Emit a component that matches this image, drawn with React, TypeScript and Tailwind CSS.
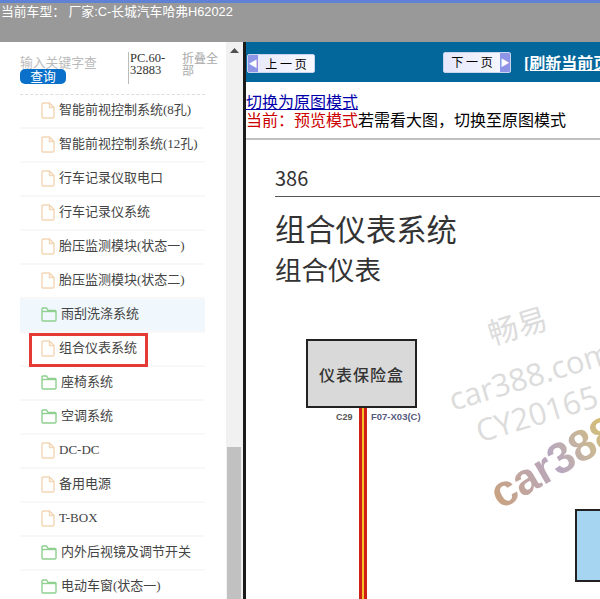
const ROWS: { label: string; kind: 'file' | 'folder'; active?: boolean; marked?: boolean }[] = [
  { label: '智能前视控制系统(8孔)', kind: 'file' },
  { label: '智能前视控制系统(12孔)', kind: 'file' },
  { label: '行车记录仪取电口', kind: 'file' },
  { label: '行车记录仪系统', kind: 'file' },
  { label: '胎压监测模块(状态一)', kind: 'file' },
  { label: '胎压监测模块(状态二)', kind: 'file' },
  { label: '雨刮洗涤系统', kind: 'folder', active: true },
  { label: '组合仪表系统', kind: 'file', marked: true },
  { label: '座椅系统', kind: 'folder' },
  { label: '空调系统', kind: 'folder' },
  { label: 'DC-DC', kind: 'file' },
  { label: '备用电源', kind: 'file' },
  { label: 'T-BOX', kind: 'file' },
  { label: '内外后视镜及调节开关', kind: 'folder' },
  { label: '电动车窗(状态一)', kind: 'folder' },
]

function FileIcon() {
  return (
    <svg width="14" height="17" viewBox="0 0 14 17" fill="none" stroke="#f3d6b5" strokeWidth="1.4" className="shrink-0">
      <path d="M1 2.2 Q1 1 2.2 1 H8.5 L13 5.5 V14.8 Q13 16 11.8 16 H2.2 Q1 16 1 14.8 Z" />
      <path d="M8.5 1 V5.5 H13" />
    </svg>
  )
}

function FolderIcon() {
  return (
    <svg width="16" height="15" viewBox="0 0 16 15" fill="none" stroke="#8fd08f" strokeWidth="1.4" className="shrink-0">
      <path d="M1 3.5 V13 Q1 14 2 14 H14 Q15 14 15 13 V4.5 Q15 3.5 14 3.5 H7 L5.5 1 H2 Q1 1 1 2 Z" />
      <path d="M1 4.5 H15" />
    </svg>
  )
}

function Row({ label, kind, active, marked }: (typeof ROWS)[number]) {
  return (
    <div
      className={`relative flex h-[34px] shrink-0 items-center gap-[4px] border-b-2 border-[#f8f8f8] pb-[2px] pl-[21px] text-[13px] text-[#444] ${
        active ? 'bg-[#f0f8fd]' : ''
      }`}
    >
      {kind === 'file' ? <FileIcon /> : <FolderIcon />}
      <span className="whitespace-nowrap">{label}</span>
      {marked && <span className="absolute left-[9px] top-0 h-[34px] w-[119px] border-[3px] border-[#e53935]" />}
    </div>
  )
}

function PageButton({ label, dir }: { label: string; dir: 'prev' | 'next' }) {
  const arrow = (
    <span className="flex h-full w-[10px] shrink-0 items-center justify-center bg-[#8f95e6] text-[9px] leading-none text-white">
      {dir === 'prev' ? '◀' : '▶'}
    </span>
  )
  return (
    <div
      className={`flex w-[68px] shrink-0 items-center overflow-hidden rounded-[2px] border border-[#c8d4ee] bg-gradient-to-r from-[#e6e8fb] to-[#f8f9ff] font-['Noto_Sans_CJK_SC',sans-serif] text-[12px] text-black ${
        dir === 'prev' ? 'mt-[3px] h-[19px]' : 'h-[21px]'
      }`}
    >
      {dir === 'prev' && arrow}
      <span className="flex-1 whitespace-pre text-center">{label}</span>
      {dir === 'next' && arrow}
    </div>
  )
}

function Diagram() {
  return (
    <div className="relative h-[459px] overflow-hidden bg-white font-['Noto_Sans_CJK_SC',sans-serif]">
      <div className="absolute left-[29px] top-[24px] text-[20px] leading-[28px] text-[#333]">386</div>
      <div className="absolute left-[29px] right-0 top-[56px] h-px bg-[#555]" />
      <div className="absolute left-[29px] top-[67px] whitespace-nowrap text-[30.3px] leading-[42px] text-[#333]">组合仪表系统</div>
      <div className="absolute left-[29px] top-[110px] whitespace-nowrap text-[26.5px] leading-[38px] text-[#333]">组合仪表</div>

      <div className="absolute left-[60px] top-[199px] flex h-[69px] w-[111px] items-center justify-center border-2 border-[#222] bg-[#d9d9d9] text-[16px] font-medium tracking-[1px] text-[#333]">
        仪表保险盒
      </div>
      <div className="absolute left-[90px] top-[271px] font-['Liberation_Sans',sans-serif] text-[9px] font-bold leading-[12px] text-[#555]">C29</div>
      <div className="absolute left-[125px] top-[271px] font-['Liberation_Sans',sans-serif] text-[9.5px] font-bold leading-[12px] text-[#56597c]">F07-X03(C)</div>
      <div className="absolute bottom-0 left-[113px] top-[268px] w-[8px] border-x-[3px] border-[#cf1f16] bg-[#f6c22c]" />

      <div className="absolute left-[329px] top-[369px] h-[73px] w-[40px] border-2 border-[#222] bg-[#a6d5f2]" />

      <div className="absolute left-[241px] top-[169px] -rotate-[17deg] text-[30px] leading-none text-[#dcdcdc]">畅易</div>
      <div className="absolute left-[200px] top-[220px] -rotate-[17deg] whitespace-nowrap font-['Open_Sans',sans-serif] text-[31px] leading-none text-[#dcdcdc]">car388.com</div>
      <div className="absolute left-[228px] top-[258px] -rotate-[17deg] whitespace-nowrap font-['Open_Sans',sans-serif] text-[31px] leading-none text-[#dcdcdc]">CY20165</div>
      <div className="absolute left-[238px] top-[300px] -rotate-[30deg] whitespace-nowrap bg-gradient-to-r from-[#c9a27f] via-[#b7a7c0] to-[#d8c06a] bg-clip-text font-['Liberation_Sans',sans-serif] text-[44px] font-bold leading-none text-transparent">
        car388
      </div>
    </div>
  )
}

export default function App() {
  return (
    <div className="flex h-[599px] w-[600px] flex-col overflow-hidden bg-white font-['Liberation_Serif','Noto_Sans_CJK_SC',serif]">
      <div className="h-[42px] shrink-0 border-t-[3px] border-[#5f82d6] bg-[#999999] pl-px font-['Liberation_Sans','Noto_Sans_CJK_SC',sans-serif] text-[12.8px] leading-[18px] text-white">
        当前车型：&nbsp;厂家:C-长城汽车哈弗H62022
      </div>

      <div className="flex min-h-0 flex-1">
        <aside className="flex w-[226px] shrink-0 flex-col overflow-hidden pl-[20px] pr-[21px]">
          <div className="flex h-[53px] shrink-0 border-b border-dashed border-[#ddd] pt-[10px]">
            <div className="w-[108px] shrink-0">
              <div className="h-[17px] w-[77px] overflow-hidden whitespace-nowrap pt-[2px] font-['Noto_Sans_CJK_SC',sans-serif] text-[12.8px] leading-[15px] text-[#bbb]">
                输入关键字查询
              </div>
              <div className="flex h-[15px] w-[46px] items-center justify-center rounded-[5px] bg-[#0a70c9] font-['Noto_Sans_CJK_SC',sans-serif] text-[12.8px] leading-none text-white">
                查询
              </div>
            </div>
            <div className="h-[32px] w-[54px] shrink-0 border-l border-[#bbb] pl-px text-[12.5px] leading-[12px] text-[#333]">
              PC.60-
              <br />
              32883
            </div>
            <div className="w-[36px] shrink-0 font-['Noto_Sans_CJK_SC',sans-serif] text-[12px] leading-[12px] text-[#aaa]">折叠全部</div>
          </div>
          <div className="flex flex-col">
            {ROWS.map((row) => (
              <Row key={row.label} {...row} />
            ))}
          </div>
        </aside>

        <div className="flex w-[17px] shrink-0 flex-col bg-[#f1f1f1]">
          <div className="flex h-[405px] justify-center pt-[6px]">
            <svg width="9" height="5" viewBox="0 0 9 5" className="fill-[#505050]">
              <path d="M4.5 0 L9 5 H0 Z" />
            </svg>
          </div>
          <div className="mx-[1px] w-[14px] flex-1 bg-[#c1c1c1]" />
        </div>

        <main className="flex min-w-0 flex-1 flex-col border-l-[3px] border-[#1b1b1b]">
          <div className="flex h-[40px] shrink-0 items-center overflow-hidden bg-[#04679b] pl-px">
            <PageButton label="上 一 页" dir="prev" />
            <div className="ml-[128px] shrink-0">
              <PageButton label="下 一 页" dir="next" />
            </div>
            <span className="ml-[13px] mt-[4px] whitespace-nowrap text-[16px] font-bold text-white underline">[刷新当前页]</span>
          </div>
          <div className="h-[58px] shrink-0 border-b-2 border-[#c0c0c0] pt-[12px] text-[16px] leading-[18px]">
            <div className="text-[#0000aa] underline">切换为原图模式</div>
            <div className="whitespace-nowrap text-black">
              <span className="text-[#cc0000]">当前：预览模式</span>若需看大图，切换至原图模式
            </div>
          </div>
          <Diagram />
        </main>
      </div>
    </div>
  )
}
